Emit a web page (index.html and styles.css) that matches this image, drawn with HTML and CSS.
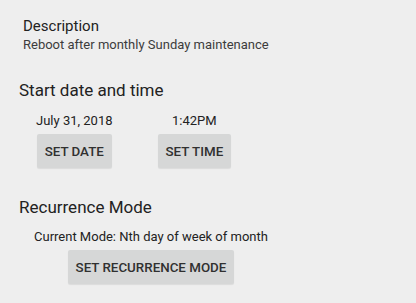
FILE: index.html
```html
<!DOCTYPE html>
<html>
<head>
<meta charset="utf-8">
<link rel="stylesheet" href="styles.css">
</head>
<body>
<div class="page">
  <section class="desc">
    <div class="desc-title">Description</div>
    <div class="desc-text">Reboot after monthly Sunday maintenance</div>
  </section>

  <section class="block start">
    <h2 class="heading">Start date and time</h2>
    <div class="pickers">
      <div class="picker">
        <div class="value">July 31, 2018</div>
        <button class="btn">SET DATE</button>
      </div>
      <div class="picker">
        <div class="value">1:42PM</div>
        <button class="btn">SET TIME</button>
      </div>
    </div>
  </section>

  <section class="block recur">
    <h2 class="heading">Recurrence Mode</h2>
    <div class="recur-body">
      <div class="picker">
        <div class="value">Current Mode: Nth day of week of month</div>
        <button class="btn">SET RECURRENCE MODE</button>
      </div>
    </div>
  </section>
</div>
</body>
</html>
```

FILE: styles.css
```css
html, body {
  margin: 0;
  padding: 0;
  background: #eeeeee;
}
body {
  font-family: Roboto, "Liberation Sans", sans-serif;
  color: #222222;
  width: 416px;
  height: 303px;
  overflow: hidden;
}
.page {
  display: flex;
  flex-direction: column;
  padding-top: 17px;
}
.desc {
  padding-left: 23px;
  display: flex;
  flex-direction: column;
  gap: 2px;
}
.desc-title {
  font-size: 15px;
  line-height: 18px;
  color: #222222;
}
.desc-text {
  font-size: 13px;
  line-height: 16px;
  color: #3c3c3c;
}
.block {
  padding-left: 19px;
}
.start {
  margin-top: 27px;
}
.recur {
  margin-top: 29px;
}
.heading {
  margin: 0;
  font-size: 17px;
  line-height: 20px;
  font-weight: 400;
  color: #222222;
}
.pickers {
  display: flex;
  gap: 45px;
  padding-left: 17px;
  margin-top: 13px;
}
.picker {
  display: flex;
  flex-direction: column;
  align-items: center;
  gap: 5px;
}
.value {
  font-size: 13px;
  line-height: 16px;
  color: #222222;
}
.recur-body {
  display: flex;
  padding-left: 15px;
  margin-top: 12px;
}
.btn {
  font-family: Roboto, "Liberation Sans", sans-serif;
  font-size: 13.35px;
  font-weight: 500;
  color: #303030;
  background: #d6d7d7;
  border: none;
  border-radius: 2px;
  height: 34px;
  padding: 0 8px;
  box-shadow: 0 1px 1px rgba(0,0,0,0.08);
}
```
